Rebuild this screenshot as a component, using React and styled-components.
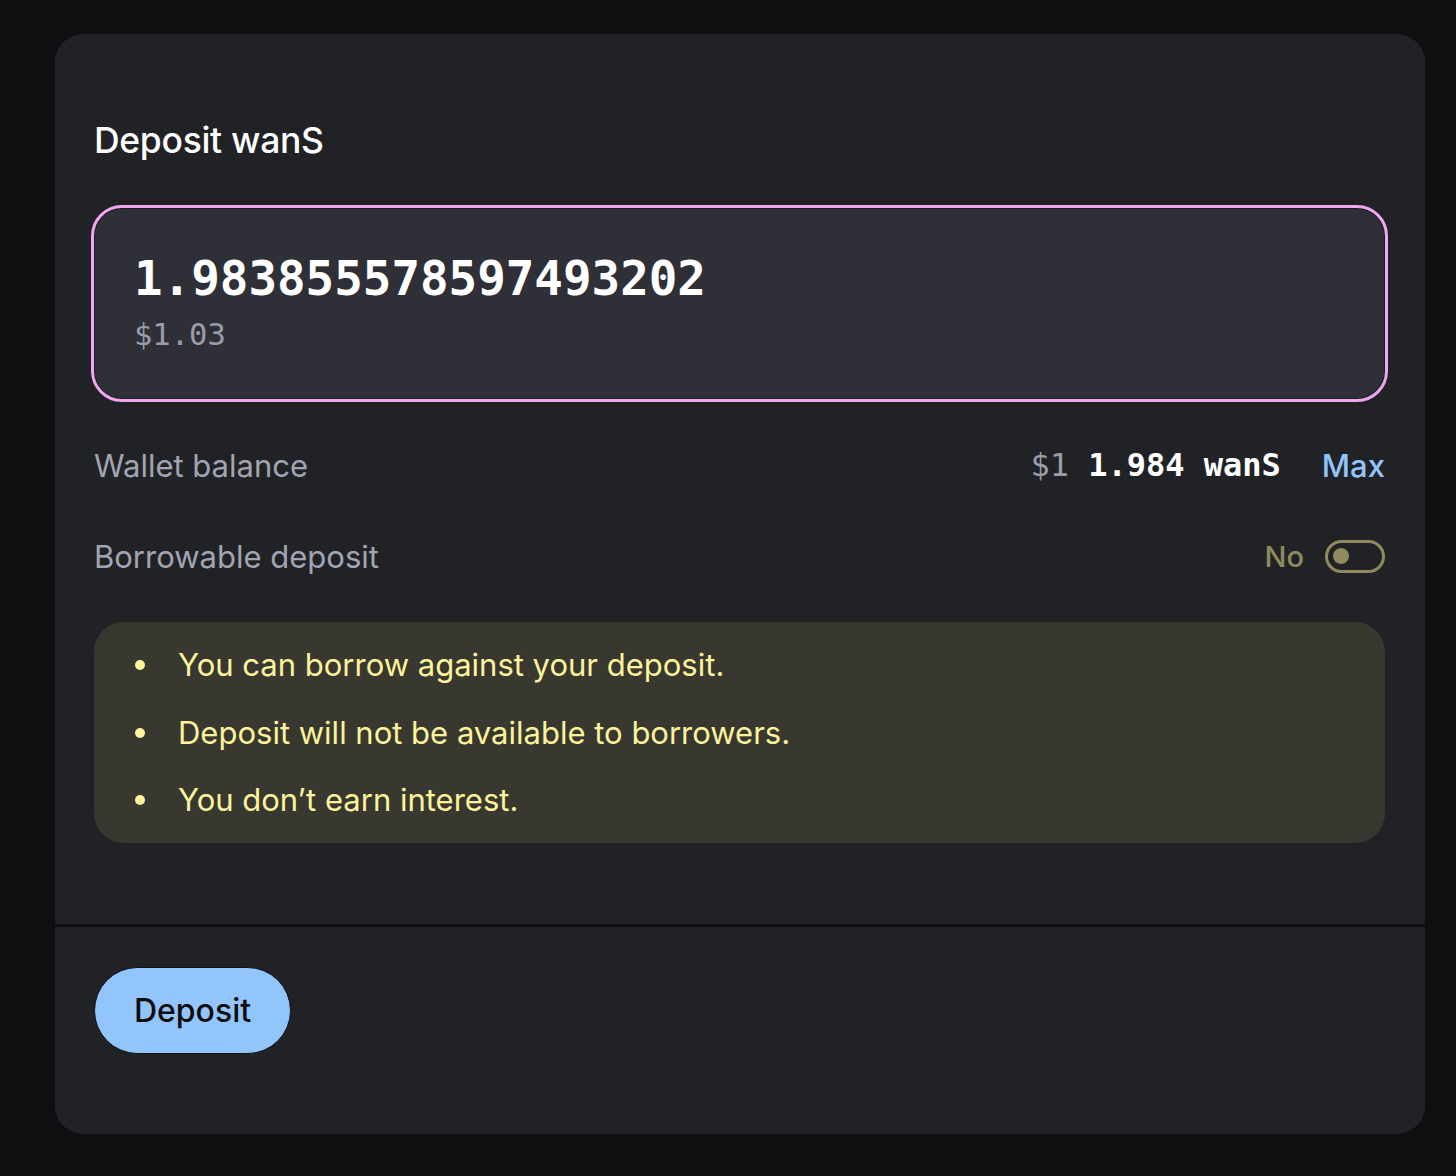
import React from "react";
import styled, { createGlobalStyle } from "styled-components";

const Global = createGlobalStyle`
  html, body { margin: 0; padding: 0; background: #0e0f11; }
  body { font-family: Inter, "Noto Sans", sans-serif; -webkit-font-smoothing: antialiased; }
  * { box-sizing: border-box; }
`;

const Page = styled.div`
  min-height: 1176px;
  padding: 34px 31px 42px 55px;
`;

const Card = styled.section`
  width: 1370px;
  height: 1100px;
  background: #212226;
  border-radius: 28px;
  display: flex;
  flex-direction: column;
  overflow: hidden;
`;

const Body = styled.div`
  padding: 87px 40px 81px 39px;
  display: flex;
  flex-direction: column;
`;

const Title = styled.h2`
  margin: 0;
  font-family: Inter, sans-serif;
  font-weight: 500;
  font-size: 35.5px;
  line-height: 40px;
  color: #ffffff;
  letter-spacing: -0.3px;
`;

const AmountBox = styled.div`
  margin-top: 47px;
  height: 191px;
  background: #2f3037;
  border-radius: 28px;
  border: 1px solid #1c1d21;
  outline: 3px solid #f0a6f0;
  outline-offset: 0;
  padding: 42px 39px 0;
  display: flex;
  flex-direction: column;
  gap: 8px;
`;

const Amount = styled.div`
  font-family: "DejaVu Sans Mono", monospace;
  font-weight: 700;
  font-size: 47.5px;
  line-height: 56px;
  color: #ffffff;
`;

const Fiat = styled.div`
  font-family: "DejaVu Sans Mono", monospace;
  font-size: 30.5px;
  line-height: 40px;
  color: #9a9da8;
`;

const Row = styled.div`
  height: 60px;
  margin-top: ${(p) => p.$mt}px;
  display: flex;
  align-items: center;
  justify-content: space-between;
`;

const Label = styled.span`
  font-size: 31px;
  color: #a1a5b2;
  font-weight: 400;
`;

const RightGroup = styled.div`
  display: flex;
  align-items: center;
  gap: ${(p) => p.$gap}px;
`;

const Mono = styled.span`
  font-family: "DejaVu Sans Mono", monospace;
  font-size: 32px;
  font-weight: ${(p) => (p.$bold ? 700 : 400)};
  color: ${(p) => (p.$muted ? "#9a9da8" : "#ffffff")};
  white-space: pre;
`;

const MaxLink = styled.button`
  background: none;
  border: none;
  padding: 0;
  font-family: Inter, sans-serif;
  font-size: 31px;
  font-weight: 500;
  color: #93c5fd;
  cursor: pointer;
`;

const Toggle = styled.span`
  width: 60px;
  height: 33px;
  border: 3px solid #8f8a5e;
  border-radius: 20px;
  display: flex;
  align-items: center;
  padding-left: 5px;
  &::before {
    content: "";
    width: 16px;
    height: 16px;
    border-radius: 50%;
    background: #8f8a5e;
  }
`;

const ToggleText = styled.span`
  font-size: 29px;
  font-weight: 500;
  color: #8f8a5e;
`;

const Notice = styled.ul`
  margin: 36px 0 0;
  padding: 19px 0;
  list-style: none;
  background: #383831;
  border-radius: 30px;
  display: flex;
  flex-direction: column;
  gap: 19.5px;
`;

const NoticeItem = styled.li`
  position: relative;
  padding-left: 84px;
  font-size: 31px;
  line-height: 48px;
  color: #fcf39b;
  &::before {
    content: "";
    position: absolute;
    left: 41px;
    top: 19px;
    width: 10px;
    height: 10px;
    border-radius: 50%;
    background: #fcf39b;
  }
`;

const Footer = styled.div`
  border-top: 3px solid #0f1012;
  padding: 40px 39px;
`;

const PrimaryButton = styled.button`
  width: 197px;
  height: 87px;
  border-radius: 44px;
  border: 1px solid #0f1012;
  background: #93c5fd;
  color: #0b0c0e;
  font-family: Inter, sans-serif;
  font-size: 32px;
  font-weight: 500;
  cursor: pointer;
`;

export default function App() {
  return (
    <Page>
      <Global />
      <Card>
        <Body>
          <Title>Deposit wanS</Title>
          <AmountBox>
            <Amount>1.983855578597493202</Amount>
            <Fiat>$1.03</Fiat>
          </AmountBox>
          <Row $mt={36}>
            <Label>Wallet balance</Label>
            <RightGroup $gap={41}>
              <span>
                <Mono $muted>$1 </Mono>
                <Mono $bold>1.984 wanS</Mono>
              </span>
              <MaxLink>Max</MaxLink>
            </RightGroup>
          </Row>
          <Row $mt={31}>
            <Label>Borrowable deposit</Label>
            <RightGroup $gap={21}>
              <ToggleText>No</ToggleText>
              <Toggle />
            </RightGroup>
          </Row>
          <Notice>
            <NoticeItem>You can borrow against your deposit.</NoticeItem>
            <NoticeItem>Deposit will not be available to borrowers.</NoticeItem>
            <NoticeItem>You don’t earn interest.</NoticeItem>
          </Notice>
        </Body>
        <Footer>
          <PrimaryButton>Deposit</PrimaryButton>
        </Footer>
      </Card>
    </Page>
  );
}
